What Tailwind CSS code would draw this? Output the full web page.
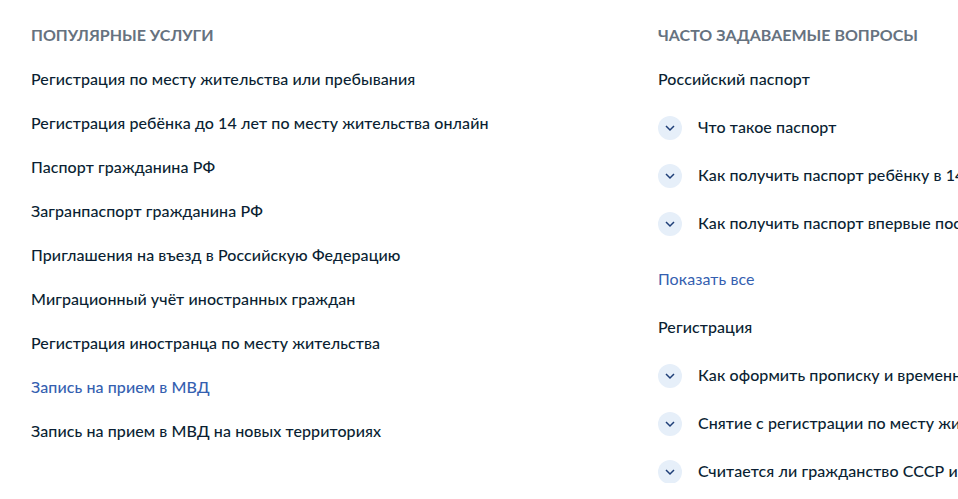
<!DOCTYPE html>
<html lang="ru">
<head>
    <meta charset="UTF-8">
    <title>Популярные услуги</title>
    <script src="https://cdn.jsdelivr.net/npm/@tailwindcss/browser@4"></script>
</head>
<body class="bg-white h-[499px] overflow-hidden font-['Lato','Liberation_Sans',sans-serif] text-[16px] font-medium tracking-[0.09px] text-[#0b1f33]">
    <div class="flex pl-[31px] pt-[24px] w-[958px] overflow-hidden">
        <div class="w-[627px] shrink-0">
            <h2 class="text-[16px] leading-[22px] font-bold tracking-normal text-[#66727f] mb-[22px]">ПОПУЛЯРНЫЕ УСЛУГИ</h2>
            <div class="flex flex-col gap-[22px] leading-[22px]">
                <a>Регистрация по месту жительства или пребывания</a>
                <a>Регистрация ребёнка до 14 лет по месту жительства онлайн</a>
                <a>Паспорт гражданина РФ</a>
                <a>Загранпаспорт гражданина РФ</a>
                <a>Приглашения на въезд в Российскую Федерацию</a>
                <a>Миграционный учёт иностранных граждан</a>
                <a>Регистрация иностранца по месту жительства</a>
                <a class="text-[#3560b0]">Запись на прием в МВД</a>
                <a>Запись на прием в МВД на новых территориях</a>
            </div>
        </div>
        <div class="shrink-0 w-[400px] leading-[22px]">
            <h2 class="text-[16px] leading-[22px] font-bold tracking-normal text-[#66727f] mb-[22px]">ЧАСТО ЗАДАВАЕМЫЕ ВОПРОСЫ</h2>
            <div>Российский паспорт</div>
            <div class="flex flex-col gap-[24px] mt-[25px]">
                <div class="flex items-center gap-[16px] h-[24px]">
                    <span class="w-[24px] h-[24px] mt-[2px] rounded-full bg-[#e6eff9] flex items-center justify-center shrink-0">
                        <svg width="12" height="8" viewBox="0 0 12 8" fill="none"><path d="M2 2l4 4 4-4" stroke="#1f3f78" stroke-width="1.5"/></svg>
                    </span>
                    <span class="whitespace-nowrap">Что такое паспорт</span>
                </div>
                <div class="flex items-center gap-[16px] h-[24px]">
                    <span class="w-[24px] h-[24px] mt-[2px] rounded-full bg-[#e6eff9] flex items-center justify-center shrink-0">
                        <svg width="12" height="8" viewBox="0 0 12 8" fill="none"><path d="M2 2l4 4 4-4" stroke="#1f3f78" stroke-width="1.5"/></svg>
                    </span>
                    <span class="whitespace-nowrap">Как получить паспорт ребёнку в 14 лет</span>
                </div>
                <div class="flex items-center gap-[16px] h-[24px]">
                    <span class="w-[24px] h-[24px] mt-[2px] rounded-full bg-[#e6eff9] flex items-center justify-center shrink-0">
                        <svg width="12" height="8" viewBox="0 0 12 8" fill="none"><path d="M2 2l4 4 4-4" stroke="#1f3f78" stroke-width="1.5"/></svg>
                    </span>
                    <span class="whitespace-nowrap">Как получить паспорт впервые после</span>
                </div>
            </div>
            <div class="mt-[33px] text-[#3560b0] font-normal">Показать все</div>
            <div class="mt-[26px]">Регистрация</div>
            <div class="flex flex-col gap-[24px] mt-[25px]">
                <div class="flex items-center gap-[16px] h-[24px]">
                    <span class="w-[24px] h-[24px] mt-[2px] rounded-full bg-[#e6eff9] flex items-center justify-center shrink-0">
                        <svg width="12" height="8" viewBox="0 0 12 8" fill="none"><path d="M2 2l4 4 4-4" stroke="#1f3f78" stroke-width="1.5"/></svg>
                    </span>
                    <span class="whitespace-nowrap">Как оформить прописку и временную</span>
                </div>
                <div class="flex items-center gap-[16px] h-[24px]">
                    <span class="w-[24px] h-[24px] mt-[2px] rounded-full bg-[#e6eff9] flex items-center justify-center shrink-0">
                        <svg width="12" height="8" viewBox="0 0 12 8" fill="none"><path d="M2 2l4 4 4-4" stroke="#1f3f78" stroke-width="1.5"/></svg>
                    </span>
                    <span class="whitespace-nowrap">Снятие с регистрации по месту жительства</span>
                </div>
                <div class="flex items-center gap-[16px] h-[24px]">
                    <span class="w-[24px] h-[24px] mt-[2px] rounded-full bg-[#e6eff9] flex items-center justify-center shrink-0">
                        <svg width="12" height="8" viewBox="0 0 12 8" fill="none"><path d="M2 2l4 4 4-4" stroke="#1f3f78" stroke-width="1.5"/></svg>
                    </span>
                    <span class="whitespace-nowrap">Считается ли гражданство СССР и</span>
                </div>
            </div>
        </div>
    </div>
</body>
</html>
